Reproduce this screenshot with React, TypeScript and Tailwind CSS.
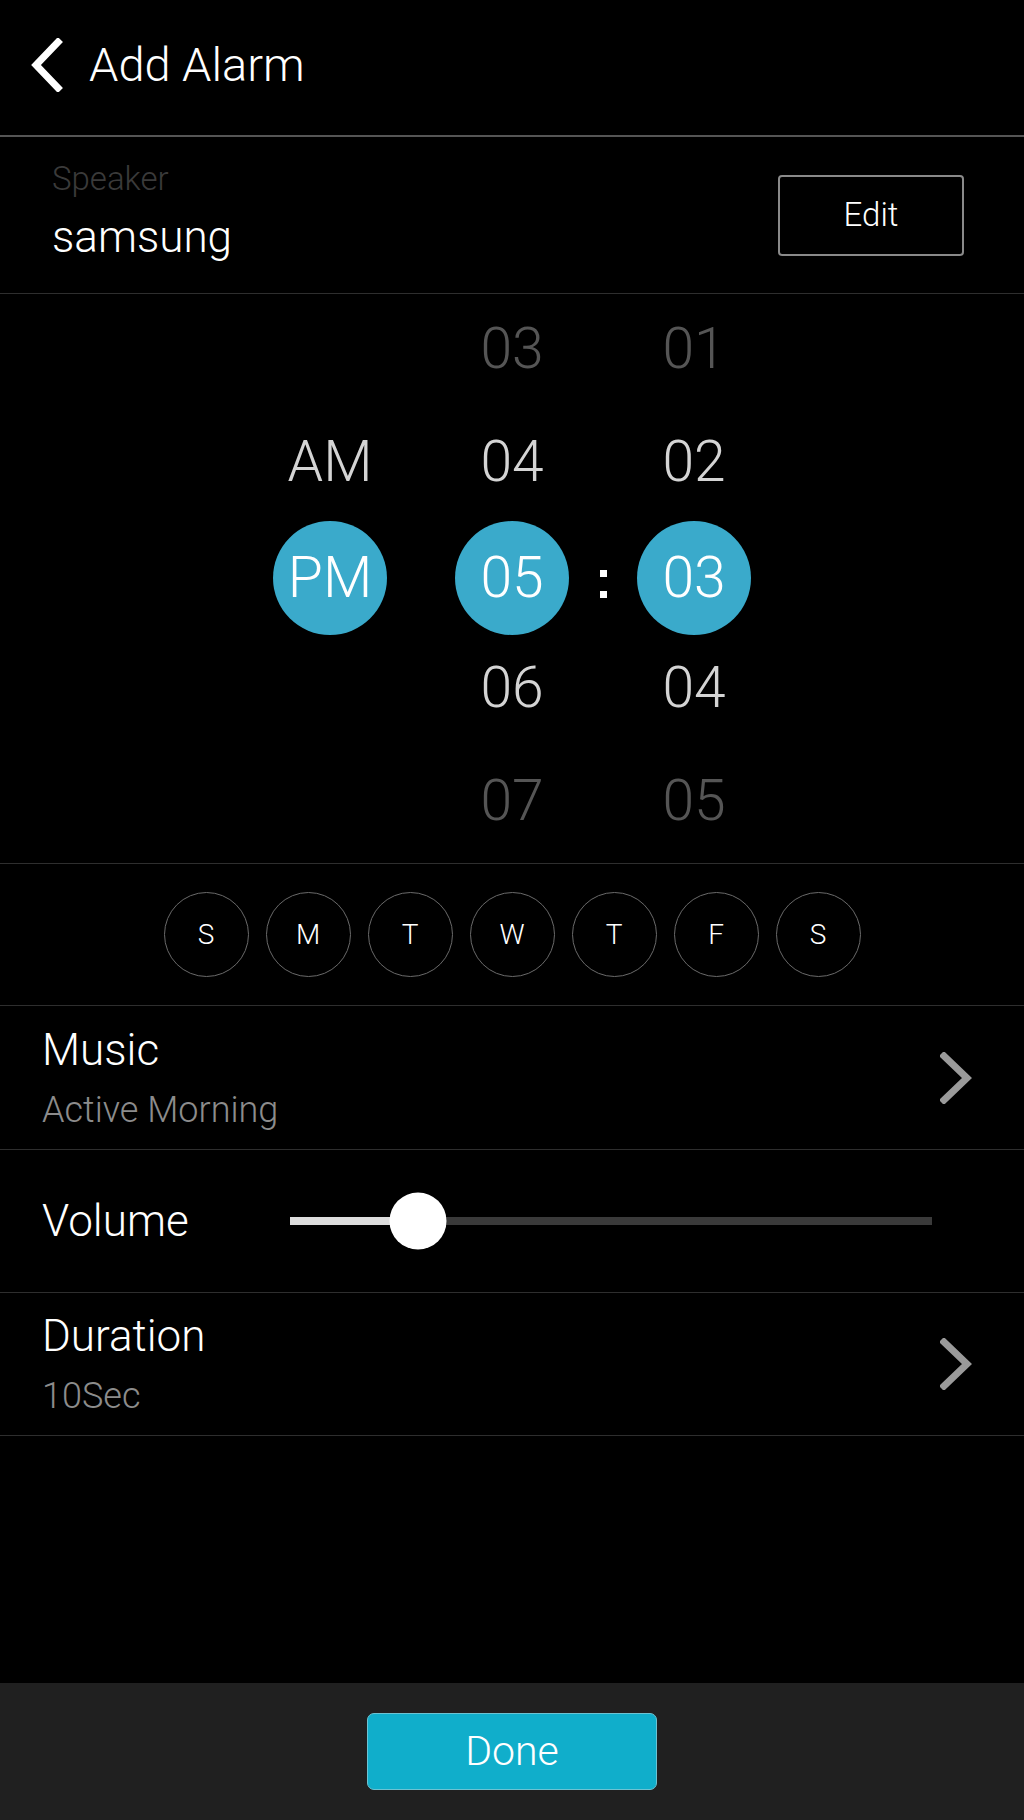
import { useState } from 'react';

const hours = ['03', '04', '05', '06', '07'];
const minutes = ['01', '02', '03', '04', '05'];
const days = ['S', 'M', 'T', 'W', 'T', 'F', 'S'];

function rowColor(i: number) {
  if (i === 0 || i === 4) return 'text-[#555555]';
  return 'text-[#d4d4d4]';
}

function Chevron({ className }: { className?: string }) {
  return (
    <svg width="32" height="52" viewBox="0 0 32 52" className={className} fill="none">
      <path d="M4 4 L27 26 L4 48" stroke="currentColor" strokeWidth="7" strokeLinecap="square" strokeLinejoin="miter" />
    </svg>
  );
}

function PickerColumn({ items, selected }: { items: (string | null)[]; selected: number }) {
  return (
    <div className="flex flex-col w-[114px]">
      {items.map((v, i) => (
        <div key={i} className="h-[113px] flex items-center justify-center">
          {v &&
            (i === selected ? (
              <div className="w-[114px] h-[114px] shrink-0 rounded-full bg-[#3aaacb] flex items-center justify-center text-white text-[57px] leading-none">
                {v}
              </div>
            ) : (
              <span className={`text-[57px] leading-none pb-[6px] ${rowColor(i)}`}>{v}</span>
            ))}
        </div>
      ))}
    </div>
  );
}

export default function App() {
  const [volume] = useState(20);

  return (
    <div
      className="w-[1024px] min-h-[1820px] bg-black text-white flex flex-col font-light"
      style={{ fontFamily: 'Roboto, "Liberation Sans", Arial, sans-serif' }}
    >
      {/* header */}
      <header className="h-[137px] flex items-center border-b-2 border-[#555555] pb-[6px]">
        <svg width="36" height="54" viewBox="0 0 36 54" className="ml-[28px]" fill="none">
          <path d="M30 4 L8 27 L30 50" stroke="white" strokeWidth="7" strokeLinecap="square" />
        </svg>
        <h1 className="ml-[25px] text-[47px] leading-none text-white">Add Alarm</h1>
      </header>

      {/* speaker */}
      <section className="h-[157px] flex items-center justify-between border-b border-[#2e2e2e] pl-[52px] pr-[60px]">
        <div className="flex flex-col pb-[10px]">
          <span className="text-[33px] leading-none text-[#3a3a3a]">Speaker</span>
          <span className="text-[44px] leading-none text-white mt-[20px]">samsung</span>
        </div>
        <button className="w-[186px] h-[81px] border-2 border-[#8a8a8a] rounded-[4px] text-[33px] text-white">
          Edit
        </button>
      </section>

      {/* time picker */}
      <section className="h-[570px] flex justify-center gap-[68px] border-b border-[#2e2e2e] pt-[1px]">
        <PickerColumn items={[null, 'AM', 'PM', null, null]} selected={2} />
        <div className="flex">
          <PickerColumn items={hours} selected={2} />
          <div className="w-[68px] h-[565px] flex flex-col items-center justify-center gap-[14px] pt-[12px]">
            <div className="w-[7px] h-[7px] bg-white" />
            <div className="w-[7px] h-[7px] bg-white" />
          </div>
          <PickerColumn items={minutes} selected={2} />
        </div>
      </section>

      {/* days */}
      <section className="h-[142px] flex items-center justify-center gap-[17px] border-b border-[#2e2e2e]">
        {days.map((d, i) => (
          <div
            key={i}
            className="w-[85px] h-[85px] rounded-full border border-[#6a6a6a] flex items-center justify-center text-[28px] text-white"
          >
            {d}
          </div>
        ))}
      </section>

      {/* music */}
      <section className="h-[144px] flex items-center justify-between border-b border-[#2e2e2e] pl-[42px] pr-[52px]">
        <div className="flex flex-col">
          <span className="text-[44px] leading-none text-white">Music</span>
          <span className="text-[36px] leading-none text-[#8c8c8c] mt-[20px]">Active Morning</span>
        </div>
        <Chevron className="text-[#9a9a9a]" />
      </section>

      {/* volume */}
      <section className="h-[143px] flex items-center border-b border-[#2e2e2e] pl-[42px]">
        <span className="w-[248px] text-[44px] leading-none text-white">Volume</span>
        <div className="relative w-[642px] h-[8px] bg-[#3a3a3a]">
          <div className="h-full bg-[#dddddd]" style={{ width: `${volume}%` }} />
          <div
            className="absolute top-1/2 w-[57px] h-[57px] -translate-x-1/2 -translate-y-1/2 rounded-full bg-white"
            style={{ left: `${volume}%` }}
          />
        </div>
      </section>

      {/* duration */}
      <section className="h-[143px] flex items-center justify-between border-b border-[#2e2e2e] pl-[42px] pr-[52px]">
        <div className="flex flex-col">
          <span className="text-[44px] leading-none text-white">Duration</span>
          <span className="text-[36px] leading-none text-[#8c8c8c] mt-[20px]">10Sec</span>
        </div>
        <Chevron className="text-[#9a9a9a]" />
      </section>

      <div className="flex-1" />

      {/* footer */}
      <footer className="h-[137px] bg-[#202020] flex items-center justify-center">
        <button className="w-[290px] h-[77px] rounded-[7px] bg-[#10aecb] border border-[#6cc3d3] text-[41px] text-white">
          Done
        </button>
      </footer>
    </div>
  );
}
